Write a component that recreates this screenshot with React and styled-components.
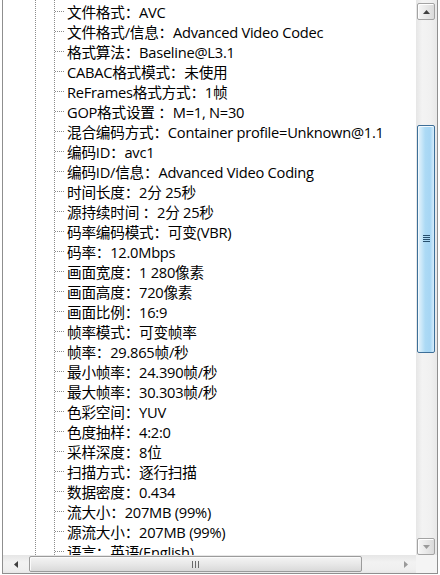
import React from "react";
import styled, { createGlobalStyle } from "styled-components";

const rows = [
  "文件格式：AVC",
  "文件格式/信息：Advanced Video Codec",
  "格式算法：Baseline@L3.1",
  "CABAC格式模式：未使用",
  "ReFrames格式方式：1帧",
  "GOP格式设置 ：M=1, N=30",
  "混合编码方式：Container profile=Unknown@1.1",
  "编码ID：avc1",
  "编码ID/信息：Advanced Video Coding",
  "时间长度：2分 25秒",
  "源持续时间 ：2分 25秒",
  "码率编码模式：可变(VBR)",
  "码率：12.0Mbps",
  "画面宽度：1 280像素",
  "画面高度：720像素",
  "画面比例：16:9",
  "帧率模式：可变帧率",
  "帧率：29.865帧/秒",
  "最小帧率：24.390帧/秒",
  "最大帧率：30.303帧/秒",
  "色彩空间：YUV",
  "色度抽样：4:2:0",
  "采样深度：8位",
  "扫描方式：逐行扫描",
  "数据密度：0.434",
  "流大小：207MB (99%)",
  "源流大小：207MB (99%)",
  "语言：英语(English)",
];

export default function App() {
  return (
    <>
      <GlobalStyle />
      <Outer>
        <Frame>
          <Tree>
            {rows.map((text) => (
              <Row key={text}>{text}</Row>
            ))}
          </Tree>

          <VTrack>
            <ArrowButton>
              <Arrow dir="up" />
            </ArrowButton>
            <VGap size={105} />
            <VThumb>
              <svg width="7" height="8" viewBox="0 0 7 8">
                {[0, 2, 4, 6].map((y) => (
                  <rect key={y} x="0" y={y} width="7" height="1" fill="#28506e" />
                ))}
              </svg>
            </VThumb>
            <VGap grow />
            <ArrowButton>
              <Arrow dir="down" light />
            </ArrowButton>
          </VTrack>

          <HTrack>
            <HArrowBox>
              <Arrow dir="left" />
            </HArrowBox>
            <HThumb>
              <svg width="8" height="7" viewBox="0 0 8 7">
                {[0, 3, 6].map((x) => (
                  <rect key={x} x={x} y="0" width="1" height="7" fill="#6a6a6a" />
                ))}
              </svg>
            </HThumb>
            <HRest />
            <HArrowBox>
              <Arrow dir="right" light />
            </HArrowBox>
          </HTrack>

          <Corner />
        </Frame>
      </Outer>
    </>
  );
}

function Arrow({ dir, light }) {
  const fill = light ? "#9a9a9a" : "#404040";
  const shapes = {
    up: "0,4 7,4 3.5,0",
    down: "0,0 7,0 3.5,4",
    left: "4,0 4,7 0,3.5",
    right: "0,0 0,7 4,3.5",
  };
  const vertical = dir === "up" || dir === "down";
  return (
    <svg
      width={vertical ? 7 : 4}
      height={vertical ? 4 : 7}
      viewBox={vertical ? "0 0 7 4" : "0 0 4 7"}
    >
      <polygon points={shapes[dir]} fill={fill} />
    </svg>
  );
}

const GlobalStyle = createGlobalStyle`
  html, body {
    margin: 0;
    padding: 0;
    background: #ffffff;
  }
`;

const Outer = styled.div`
  width: 440px;
  height: 575px;
  box-sizing: border-box;
  padding: 0 2px 1px 2px;
  background: #ffffff;
`;

const Frame = styled.div`
  height: 100%;
  box-sizing: border-box;
  border-left: 1px solid #8f8f8f;
  border-right: 1px solid #8f8f8f;
  border-bottom: 1px solid #8f8f8f;
  display: grid;
  grid-template-columns: 1fr 21px;
  grid-template-rows: 555px 1fr;
  overflow: hidden;
`;

const Tree = styled.div`
  overflow: hidden;
  padding-top: 2px;
  background-image: repeating-linear-gradient(
      to bottom,
      #8c8c8c 0 1px,
      transparent 1px 2px
    ),
    repeating-linear-gradient(to bottom, #8c8c8c 0 1px, transparent 1px 2px);
  background-size: 1px 100%, 1px 100%;
  background-position: 32px 0, 51px 0;
  background-repeat: no-repeat;
`;

const Row = styled.div`
  height: 20px;
  line-height: 20px;
  padding-left: 64px;
  white-space: nowrap;
  font-family: "Open Sans", "Noto Sans CJK SC", sans-serif;
  font-size: 14.67px;
  letter-spacing: -0.25px;
  color: #000000;
  background-image: repeating-linear-gradient(
    to right,
    #8c8c8c 0 1px,
    transparent 1px 2px
  );
  background-size: 9px 1px;
  background-position: 52px 9px;
  background-repeat: no-repeat;
`;

const VTrack = styled.div`
  grid-row: 1;
  grid-column: 2;
  display: flex;
  flex-direction: column;
  padding: 3px 2px 0 1px;
  background: linear-gradient(to right, #e6e6e6, #f3f3f3 30%, #f0f0f0 70%, #e8e8e8);
`;

const VGap = styled.div`
  flex: ${(p) => (p.grow ? 1 : "none")};
  height: ${(p) => (p.size ? `${p.size}px` : "auto")};
`;

const ArrowButton = styled.div`
  flex: none;
  height: 17px;
  box-sizing: border-box;
  border: 1px solid #a3a3a3;
  border-radius: 2px;
  background: linear-gradient(to right, #f6f6f6, #e9e9e9 50%, #dadada);
  box-shadow: inset 1px 1px 0 #ffffff;
  display: flex;
  align-items: center;
  justify-content: center;
`;

const VThumb = styled.div`
  flex: none;
  height: 228px;
  box-sizing: border-box;
  border: 1px solid #3d6f98;
  border-radius: 2px;
  background: linear-gradient(
    to right,
    #e4f3fc 0,
    #cde9f9 20%,
    #acdaf5 45%,
    #a6d6f4 75%,
    #d6ecfa 100%
  );
  box-shadow: inset 1px 1px 0 #f2f9fe;
  display: flex;
  align-items: center;
  justify-content: center;
`;

const HTrack = styled.div`
  grid-row: 2;
  grid-column: 1;
  display: flex;
  align-items: stretch;
  padding: 1px 0 1px 3px;
  background: linear-gradient(to bottom, #e6e6e6, #f2f2f2 40%, #efefef 80%, #e6e6e6);
`;

const HArrowBox = styled.div`
  flex: none;
  width: 20px;
  display: flex;
  align-items: center;
  justify-content: center;
`;

const HThumb = styled.div`
  flex: none;
  width: 333px;
  margin-left: 3px;
  box-sizing: border-box;
  border: 1px solid #9b9b9b;
  border-radius: 2px;
  background: linear-gradient(to bottom, #f4f4f4, #e8e8e8 50%, #d9d9d9);
  box-shadow: inset 1px 1px 0 #fbfbfb;
  display: flex;
  align-items: center;
  justify-content: center;
`;

const HRest = styled.div`
  flex: 1;
`;

const Corner = styled.div`
  grid-row: 2;
  grid-column: 2;
  background: #f4f4f4;
`;
